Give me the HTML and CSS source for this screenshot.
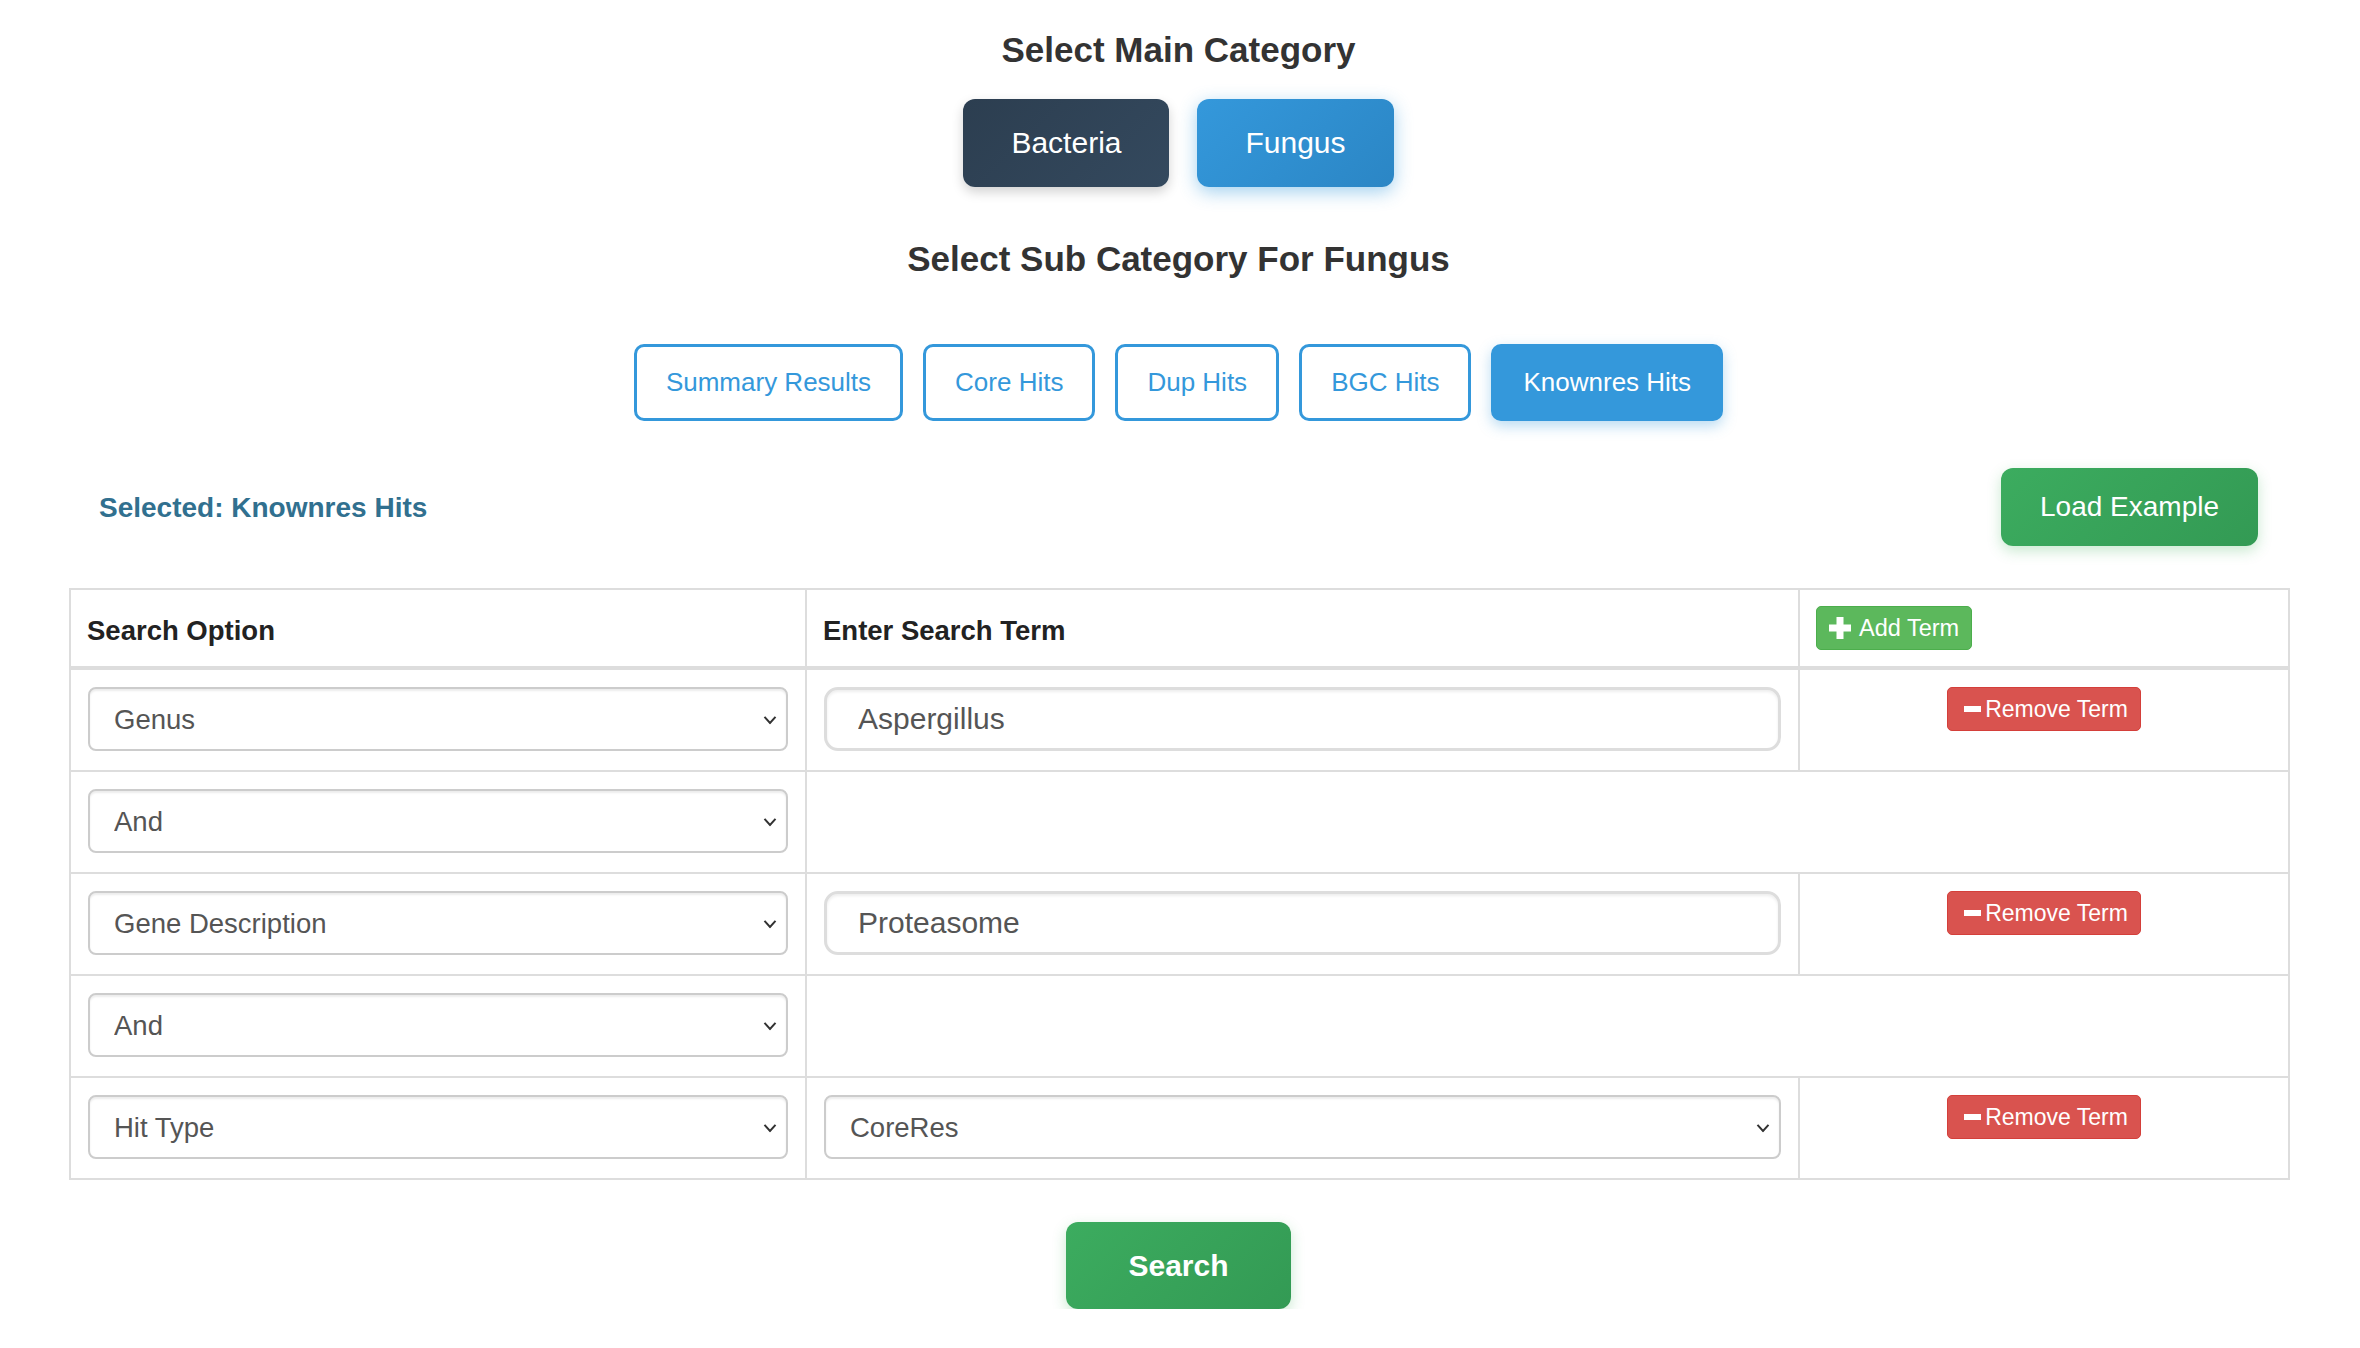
FILE: index.html
```html
<!DOCTYPE html>
<html lang="en">
<head>
<meta charset="utf-8">
<title>Search</title>
<link rel="stylesheet" href="styles.css">
</head>
<body>
<div class="page">
  <h2 class="title">Select Main Category</h2>
  <div class="main-cats">
    <button class="cat cat-dark">Bacteria</button>
    <button class="cat cat-blue">Fungus</button>
  </div>

  <h2 class="title sub-title">Select Sub Category For Fungus</h2>
  <div class="sub-cats">
    <button class="sub">Summary Results</button>
    <button class="sub">Core Hits</button>
    <button class="sub">Dup Hits</button>
    <button class="sub">BGC Hits</button>
    <button class="sub sub-active">Knownres Hits</button>
  </div>

  <div class="selected-row">
    <span class="selected">Selected: Knownres Hits</span>
    <button class="btn-green load">Load Example</button>
  </div>

  <table class="terms">
    <colgroup>
      <col class="c1">
      <col class="c2">
      <col class="c3">
    </colgroup>
    <thead>
      <tr>
        <th>Search Option</th>
        <th>Enter Search Term</th>
        <th>
          <button class="btn-add">
            <svg class="ico-plus" width="22" height="22" viewBox="0 0 22 22"><rect x="7.5" y="0" width="7" height="22" fill="#fff"/><rect x="0" y="7.5" width="22" height="7" fill="#fff"/></svg>
            <span>Add Term</span>
          </button>
        </th>
      </tr>
    </thead>
    <tbody>
      <tr>
        <td>
          <div class="select-wrap">
            <select class="sel"><option>Genus</option></select>
            <svg class="chev" width="14" height="9" viewBox="0 0 14 9"><polyline points="1.5,1.5 7,7.5 12.5,1.5" fill="none" stroke="#333" stroke-width="2"/></svg>
          </div>
        </td>
        <td><input class="term" type="text" value="Aspergillus"></td>
        <td class="act">
          <button class="btn-remove"><svg width="17" height="6" viewBox="0 0 17 6"><rect width="17" height="6" fill="#fff"/></svg><span>Remove Term</span></button>
        </td>
      </tr>
      <tr>
        <td>
          <div class="select-wrap">
            <select class="sel"><option>And</option></select>
            <svg class="chev" width="14" height="9" viewBox="0 0 14 9"><polyline points="1.5,1.5 7,7.5 12.5,1.5" fill="none" stroke="#333" stroke-width="2"/></svg>
          </div>
        </td>
        <td colspan="2"></td>
      </tr>
      <tr>
        <td>
          <div class="select-wrap">
            <select class="sel"><option>Gene Description</option></select>
            <svg class="chev" width="14" height="9" viewBox="0 0 14 9"><polyline points="1.5,1.5 7,7.5 12.5,1.5" fill="none" stroke="#333" stroke-width="2"/></svg>
          </div>
        </td>
        <td><input class="term" type="text" value="Proteasome"></td>
        <td class="act">
          <button class="btn-remove"><svg width="17" height="6" viewBox="0 0 17 6"><rect width="17" height="6" fill="#fff"/></svg><span>Remove Term</span></button>
        </td>
      </tr>
      <tr>
        <td>
          <div class="select-wrap">
            <select class="sel"><option>And</option></select>
            <svg class="chev" width="14" height="9" viewBox="0 0 14 9"><polyline points="1.5,1.5 7,7.5 12.5,1.5" fill="none" stroke="#333" stroke-width="2"/></svg>
          </div>
        </td>
        <td colspan="2"></td>
      </tr>
      <tr>
        <td>
          <div class="select-wrap">
            <select class="sel"><option>Hit Type</option></select>
            <svg class="chev" width="14" height="9" viewBox="0 0 14 9"><polyline points="1.5,1.5 7,7.5 12.5,1.5" fill="none" stroke="#333" stroke-width="2"/></svg>
          </div>
        </td>
        <td>
          <div class="select-wrap">
            <select class="sel"><option>CoreRes</option></select>
            <svg class="chev" width="14" height="9" viewBox="0 0 14 9"><polyline points="1.5,1.5 7,7.5 12.5,1.5" fill="none" stroke="#333" stroke-width="2"/></svg>
          </div>
        </td>
        <td class="act">
          <button class="btn-remove"><svg width="17" height="6" viewBox="0 0 17 6"><rect width="17" height="6" fill="#fff"/></svg><span>Remove Term</span></button>
        </td>
      </tr>
    </tbody>
  </table>

  <div class="search-wrap">
    <button class="btn-green search">Search</button>
  </div>
</div>
</body>
</html>
```

FILE: styles.css
```css
* { box-sizing: border-box; }

html, body {
  margin: 0;
  padding: 0;
  background: #fff;
}

body {
  font-family: "Liberation Sans", Arial, Helvetica, sans-serif;
  color: #333;
}

button, input, select {
  font-family: inherit;
}

.page {
  padding: 0 72px 0 69px;
}

.title {
  margin: 29px 0 0;
  font-size: 35px;
  line-height: 42px;
  font-weight: bold;
  text-align: center;
  color: #333;
}

.sub-title {
  margin-top: 51px;
}

.main-cats {
  margin-top: 28px;
  display: flex;
  justify-content: center;
  gap: 28px;
}

.cat {
  border: 0;
  border-radius: 12px;
  font-size: 30px;
  line-height: 34px;
  padding: 27px 48px;
  color: #fff;
  cursor: pointer;
}

.cat-dark {
  background: linear-gradient(135deg, #2c3e50, #34495e);
  box-shadow: 0 5px 12px rgba(0, 0, 0, 0.18);
}

.cat-blue {
  background: linear-gradient(135deg, #3498db, #2b86c5);
  box-shadow: 0 5px 18px rgba(52, 152, 219, 0.45);
}

.sub-cats {
  margin-top: 64px;
  display: flex;
  justify-content: center;
  gap: 20px;
}

.sub {
  border: 3px solid #3498db;
  border-radius: 10px;
  background: #fff;
  color: #3498db;
  font-size: 26px;
  line-height: 31px;
  padding: 20px 29px;
  cursor: pointer;
}

.sub-active {
  background: #3498db;
  color: #fff;
  box-shadow: 0 5px 14px rgba(52, 152, 219, 0.35);
}

.selected-row {
  margin-top: 47px;
  display: flex;
  justify-content: space-between;
  align-items: center;
  padding: 0 30px;
}

.selected {
  font-size: 28px;
  font-weight: bold;
  color: #31708f;
  position: relative;
  top: 1px;
}

.btn-green {
  border: 0;
  border-radius: 12px;
  color: #fff;
  background: linear-gradient(135deg, #3cac5f, #339a54);
  box-shadow: 0 5px 14px rgba(40, 167, 69, 0.25);
  cursor: pointer;
}

.load {
  font-size: 28px;
  line-height: 34px;
  padding: 22px 39px;
}

.terms {
  margin-top: 42px;
  width: 100%;
  table-layout: fixed;
  border-collapse: collapse;
}

.c1 { width: 736px; }
.c2 { width: 993px; }
.c3 { width: 490px; }

.terms th,
.terms td {
  border: 2px solid #ddd;
  vertical-align: top;
  text-align: left;
}

.terms th {
  padding: 16px;
  font-size: 27.5px;
  line-height: 44px;
  font-weight: bold;
  color: #222;
  border-bottom-width: 4px;
}

.terms th:first-child,
.terms th:nth-child(2) {
  padding-top: 19px;
  padding-bottom: 13px;
}

.terms td {
  padding: 17px 17px 19px;
}

.terms td.act {
  text-align: center;
}

.select-wrap {
  position: relative;
}

.sel {
  display: block;
  width: 100%;
  height: 64px;
  appearance: none;
  -webkit-appearance: none;
  border: 2px solid #ccc;
  border-radius: 8px;
  background: #fff;
  padding: 0 44px 0 24px;
  font-size: 27.5px;
  color: #555;
  box-shadow: inset 0 2px 2px rgba(0, 0, 0, 0.075);
}

.chev {
  position: absolute;
  right: 11px;
  top: 50%;
  transform: translateY(-40%);
  pointer-events: none;
}

.term {
  display: block;
  width: 100%;
  height: 64px;
  border: 3px solid #ddd;
  border-radius: 14px;
  padding: 0 31px;
  font-size: 30px;
  color: #555;
  background: #fff;
  box-shadow: inset 0 2px 3px rgba(0, 0, 0, 0.07);
  outline: none;
}

.btn-add {
  display: inline-flex;
  align-items: center;
  gap: 8px;
  height: 44px;
  padding: 0 12px;
  border: 1px solid #4cae4c;
  border-radius: 5px;
  background: #5cb85c;
  color: #fff;
  font-size: 23.5px;
  font-weight: normal;
  vertical-align: top;
  cursor: pointer;
}

.btn-remove {
  display: inline-flex;
  align-items: center;
  gap: 4px;
  height: 44px;
  padding: 0 12px 0 16px;
  border: 1px solid #d43f3a;
  border-radius: 5px;
  background: #d9534f;
  color: #fff;
  font-size: 23px;
  cursor: pointer;
}

.search-wrap {
  display: flex;
  justify-content: center;
  margin-top: 42px;
}

.search {
  font-size: 30px;
  line-height: 35px;
  font-weight: bold;
  padding: 26px 62px;
}
```
